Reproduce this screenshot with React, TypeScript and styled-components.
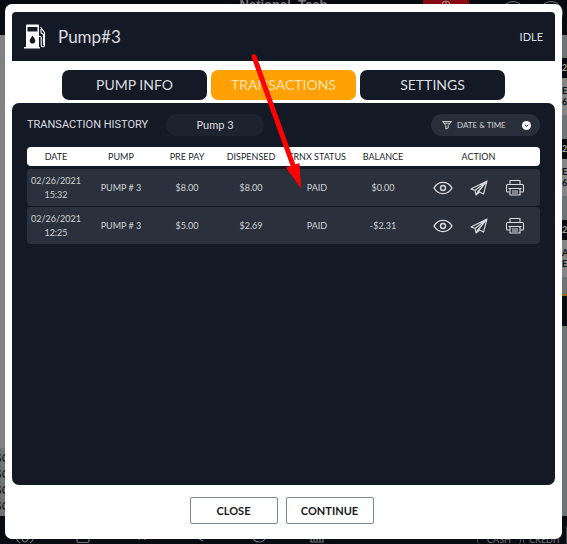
import React from "react";
import styled, { createGlobalStyle } from "styled-components";

const GlobalStyle = createGlobalStyle`
  * { box-sizing: border-box; }
  body { margin: 0; background: #7b807f; font-family: Lato, "Open Sans", sans-serif; }
  button { font-family: inherit; cursor: pointer; }
`;

const navy = "#141a25";

/* ---------- Dimmed register screen behind the dialog ---------- */

const Screen = styled.div`
  position: relative;
  display: flex;
  flex-direction: column;
  height: 100vh;
  overflow: hidden;
`;

const TopBar = styled.div`
  display: grid;
  grid-template-columns: 1fr 46px 98px;
  flex: none;
  height: 35px;
  background: #0a0a13;
  overflow: hidden;
`;

const StoreName = styled.span`
  padding-left: 144px;
  justify-self: center;
  font: 700 13px/10px "Liberation Sans", Arial, sans-serif;
  color: #77777b;
`;

const Alert = styled.div`
  display: flex;
  justify-content: center;
  background: #850b10;
`;

const RoundActions = styled.div`
  display: flex;
  justify-content: flex-end;
  gap: 14px;
  padding-top: 1px;
  padding-right: 4px;
`;

const Round = styled.span`
  width: 24px;
  height: 24px;
  border: 1px solid #77777b;
  border-radius: 50%;
`;

const Backdrop = styled.div`
  display: flex;
  flex: 1;
  justify-content: space-between;
  overflow: hidden;
`;

const Strip = styled.div<{ $end?: boolean }>`
  display: flex;
  flex-direction: column;
  justify-content: ${(p) => (p.$end ? "flex-end" : "flex-start")};
  width: 5px;
  background: ${(p) => (p.$end ? "#828282" : "#6d7473")};
  overflow: hidden;
`;

const Codes = styled.div`
  display: flex;
  flex-direction: column;
  align-items: center;
  padding: 2px 0;
  background: #6d7473;
  font-size: 11px;
  line-height: 16px;
  color: #111;
`;

const OrderCard = styled.div`
  height: 57px;
  margin-bottom: 24px;
  background: #858585;
  font-size: 9px;
  font-weight: 700;
  line-height: 10px;
  color: #111;
  &:first-child { margin-top: 23px; }
  &:nth-last-child(2) { margin-bottom: 17px; }
`;

const OrderTime = styled.div`
  height: 20px;
  margin-bottom: 8px;
  background: #0a0a13;
  color: #a5a5a5;
  line-height: 20px;
`;

const OrderLine = styled.div`
  height: 11px;
`;

const OrderTotal = styled.div`
  height: 32px;
  border-top: 2px solid #a3660c;
  background: #0a0a13;
`;

const BottomBar = styled.div`
  display: flex;
  align-items: flex-end;
  justify-content: space-between;
  flex: none;
  height: 28px;
  padding-left: 16px;
  background: #0a0a13;
  color: #77777b;
`;

const BarIcons = styled.div`
  display: flex;
  justify-content: space-between;
  width: 310px;
  height: 28px;
`;

const Payments = styled.div`
  display: flex;
  gap: 2px;
`;

const Payment = styled.button`
  display: flex;
  align-items: flex-end;
  justify-content: center;
  width: 44px;
  height: 18px;
  padding: 0;
  border: 1px solid #4b4b53;
  border-width: 0 1px;
  border-radius: 3px;
  background: transparent;
  color: #77777b;
  font-size: 9px;
  line-height: 9px;
`;

/* ---------- Dialog ---------- */

const Overlay = styled.div`
  position: absolute;
  inset: 0;
  display: flex;
  padding: 4px 5px 5px;
`;

const Dialog = styled.section`
  display: flex;
  flex: 1;
  flex-direction: column;
  min-width: 0;
  padding: 8px 7px 0;
  border-radius: 7px;
  background: #fff;
`;

const Header = styled.header`
  display: flex;
  align-items: center;
  gap: 12px;
  height: 49px;
  padding: 0 12px;
  border-radius: 4px 4px 0 0;
  background: ${navy};
  color: #dcdde0;
`;

const Title = styled.h1`
  flex: 1;
  margin: 0;
  font-size: 17px;
  font-weight: 400;
  line-height: 24px;
`;

const Status = styled.span`
  font-size: 11px;
  line-height: 16px;
`;

const Tabs = styled.nav`
  display: flex;
  gap: 4px;
  padding: 9px 50px 3px;
`;

const Tab = styled.button<{ $active?: boolean }>`
  flex: 1;
  height: 30px;
  padding: 0;
  border: 0;
  border-radius: 7px;
  background: ${(p) => (p.$active ? "#ffa104" : navy)};
  color: ${(p) => (p.$active ? "#ffe3ad" : "#dcdde0")};
  font-size: 14px;
  line-height: 20px;
`;

const Panel = styled.div`
  flex: 1;
  padding: 11px 15px;
  border-radius: 7px;
  background: ${navy};
`;

const Toolbar = styled.div`
  display: flex;
  align-items: center;
  margin-bottom: 11px;
`;

const Heading = styled.h2`
  width: 139px;
  margin: 0;
  font: 400 11px/16px Roboto, Arial, sans-serif;
  white-space: nowrap;
  color: #dcdde0;
`;

const PumpPill = styled.button`
  width: 98px;
  height: 22px;
  padding: 0;
  border: 0;
  border-radius: 11px;
  background: #1d232e;
  color: #dcdde0;
  font-size: 11px;
  line-height: 16px;
`;

const FilterPill = styled.button`
  display: flex;
  align-items: center;
  gap: 5px;
  width: 109px;
  height: 22px;
  margin-left: auto;
  padding: 0 9px 0 11px;
  border: 0;
  border-radius: 11px;
  background: #292f3a;
  color: #d0d2d5;
  font-size: 8px;
  line-height: 12px;
  white-space: nowrap;
  svg:last-child { margin-left: auto; }
`;

const Table = styled.table`
  display: grid;
  gap: 3px;
  font-size: 9px;
  line-height: 14px;
`;

const Body = styled.tbody`
  display: grid;
  gap: 1px;
`;

const Row = styled.tr<{ $head?: boolean }>`
  display: grid;
  grid-template-columns: 58fr 72fr 60fr 68fr 64fr 68fr 123fr;
  align-items: center;
  height: ${(p) => (p.$head ? "19px" : "37px")};
  border-radius: 4px;
  background: ${(p) => (p.$head ? "#fff" : "#2b313c")};
  color: ${(p) => (p.$head ? "#20242c" : "#d0d2d5")};
`;

const HeadCell = styled.th`
  padding: 0;
  font-weight: 400;
  white-space: nowrap;
  text-align: center;
`;

const Cell = styled.td`
  padding: 0;
  text-align: center;
`;

const Actions = styled.div`
  display: flex;
  justify-content: center;
  gap: 16px;
`;

const IconButton = styled.button`
  display: flex;
  padding: 0;
  border: 0;
  background: transparent;
  color: #d9dadd;
`;

const Footer = styled.footer`
  display: flex;
  justify-content: center;
  gap: 8px;
  height: 54px;
  padding: 12px 4px 15px 0;
`;

const FooterButton = styled.button`
  width: 88px;
  padding: 0;
  border: 1px solid #7d8596;
  border-radius: 2px;
  background: #fff;
  color: #171a20;
  font-size: 11px;
  font-weight: 700;
  line-height: 16px;
`;

/* Pointer drawn on top of the table, aimed at the first status cell. */
const Pointer = styled.svg`
  position: absolute;
  top: 50px;
  left: calc(50% - 39px);
  pointer-events: none;
`;

/* ---------- Icons ---------- */

const PumpIcon = () => (
  <svg width="22" height="26" viewBox="0 0 22 26" fill="none">
    <path d="M2 1.5Q2 .5 3 .5h11q1 0 1 1V23h1v1.5H0V23h2z" fill="#fff" />
    <path d="M3.5 3h10v4.5h-10z" fill={navy} />
    <path d="M8.500 11.500c1.200 2 2.800 3.400 2.800 5.200a2.800 2.800 0 0 1-5.600 0c0-1.800 1.600-3.200 2.800-5.200z" fill={navy} />
    <path d="M15 12.500h1.200q1 0 1 1V21q0 1.800 1.700 1.800T20.500 21V8.500L16.500 3M17 5v3.200q0 1.300 1.300 1.300l1.200 1V21" stroke="#fff" strokeWidth="1.1" />
  </svg>
);

const EyeIcon = () => (
  <svg width="20" height="18" viewBox="0 0 20 18" fill="none" stroke="currentColor" strokeWidth="1.4">
    <path d="M1 9C3.200 5.300 6.300 3.400 10 3.400S16.800 5.300 19 9c-2.200 3.700-5.300 5.600-9 5.600S3.200 12.700 1 9z" />
    <circle cx="10" cy="9" r="2.5" />
  </svg>
);

const SendIcon = () => (
  <svg width="20" height="18" viewBox="0 0 20 18" fill="none" stroke="currentColor" strokeWidth="1.1" strokeLinejoin="round">
    <path d="M18 2 2 10l4 1.500zM18 2 6 11.500l1 4.500zM18 2 9 12.300l5.500 2.700zM7 16l2-3.700 1.300 1z" />
  </svg>
);

const PrinterIcon = () => (
  <svg width="20" height="18" viewBox="0 0 20 18" fill="none" stroke="currentColor" strokeWidth="1.1" strokeLinejoin="round">
    <path d="M5 5.500V1.500h10v4M5 13H2.500Q1.500 13 1.500 12V6.500q0-1 1-1h15q1 0 1 1V12q0 1-1 1H15" />
    <path d="M5 9.500h10v6.500H5zM3.500 9.500h13M7 12h6M7 14h6" />
  </svg>
);

const FunnelIcon = () => (
  <svg width="10" height="10" viewBox="0 0 10 10" fill="none" stroke="currentColor" strokeWidth="1" strokeLinejoin="round">
    <path d="M.5 1.500h9L6.200 5.500v2.500L3.800 9V5.500zM2 3.200h6" />
  </svg>
);

const ChevronDot = () => (
  <svg width="9" height="9" viewBox="0 0 9 9">
    <circle cx="4.5" cy="4.5" r="4.5" fill="#fff" />
    <path d="m2.700 3.800 1.800 1.700 1.800-1.700" fill="none" stroke={navy} strokeWidth="1" />
  </svg>
);

const barIcons = [
  "M3 14a8 8 0 0 0 1 13M15 14a8 8 0 0 1-1 13M9 18a3 4 0 1 0 .1 0",
  "M3 14h12v11q0 1.500-1.500 1.500h-9Q3 26.500 3 25z",
  "M6 12v12M12 12v12",
  "M5 14q0 8 7 11",
  "M9 12a7 7 0 1 0 .1 0",
  "M3 14h12v12H3zM6 20v5M9 20v5M12 20v5",
];

const orders = [
  ["2:", "EF", "6."],
  ["2:", "EF", "6."],
  ["2:", "AI", "E"],
];

const columns = ["DATE", "PUMP", "PRE PAY", "DISPENSED", "TRNX STATUS", "BALANCE", "ACTION"];

const transactions = [
  { date: "02/26/2021", time: "15:32", pump: "PUMP # 3", prepay: "$8.00", dispensed: "$8.00", status: "PAID", balance: "$0.00" },
  { date: "02/26/2021", time: "12:25", pump: "PUMP # 3", prepay: "$5.00", dispensed: "$2.69", status: "PAID", balance: "-$2.31" },
];

export default function App() {
  return (
    <Screen>
      <GlobalStyle />
      <TopBar>
        <StoreName>National&nbsp; Tech</StoreName>
        <Alert>
          <svg width="12" height="12" viewBox="0 0 12 12" fill="none" stroke="#a5a5a5">
            <circle cx="6" cy="5" r="4" />
            <path d="M6 2v5" />
          </svg>
        </Alert>
        <RoundActions>
          <Round />
          <Round />
        </RoundActions>
      </TopBar>
      <Backdrop>
        <Strip $end>
          <Codes>
            {[0, 1, 2, 3].map((i) => (
              <span key={i}>SC</span>
            ))}
          </Codes>
        </Strip>
        <Strip>
          {orders.map(([time, name, amount], i) => (
            <OrderCard key={i}>
              <OrderTime>{time}</OrderTime>
              <OrderLine>{name}</OrderLine>
              <OrderLine>{amount}</OrderLine>
            </OrderCard>
          ))}
          <OrderTotal />
        </Strip>
      </Backdrop>
      <BottomBar>
        <BarIcons>
          {barIcons.map((d) => (
            <svg key={d} width="18" height="28" viewBox="0 0 18 28" fill="none" stroke="currentColor" strokeWidth="1.2">
              <path d={d} />
            </svg>
          ))}
        </BarIcons>
        <Payments>
          <Payment>CASH</Payment>
          <Payment>CREDIT</Payment>
        </Payments>
      </BottomBar>

      <Overlay>
        <Dialog role="dialog" aria-labelledby="pump-title">
          <Header>
            <PumpIcon />
            <Title id="pump-title">Pump#3</Title>
            <Status>IDLE</Status>
          </Header>
          <Tabs>
            <Tab>PUMP INFO</Tab>
            <Tab $active>TRANSACTIONS</Tab>
            <Tab>SETTINGS</Tab>
          </Tabs>
          <Panel>
            <Toolbar>
              <Heading>TRANSACTION HISTORY</Heading>
              <PumpPill>Pump 3</PumpPill>
              <FilterPill>
                <FunnelIcon />
                DATE &amp; TIME
                <ChevronDot />
              </FilterPill>
            </Toolbar>
            <Table>
              <thead>
                <Row $head>
                  {columns.map((c) => (
                    <HeadCell key={c} scope="col">{c}</HeadCell>
                  ))}
                </Row>
              </thead>
              <Body>
                {transactions.map((t) => (
                  <Row key={t.time}>
                    <Cell>
                      {t.date}
                      <br />
                      {t.time}
                    </Cell>
                    <Cell>{t.pump}</Cell>
                    <Cell>{t.prepay}</Cell>
                    <Cell>{t.dispensed}</Cell>
                    <Cell>{t.status}</Cell>
                    <Cell>{t.balance}</Cell>
                    <Cell>
                      <Actions>
                        <IconButton aria-label="View"><EyeIcon /></IconButton>
                        <IconButton aria-label="Send"><SendIcon /></IconButton>
                        <IconButton aria-label="Print"><PrinterIcon /></IconButton>
                      </Actions>
                    </Cell>
                  </Row>
                ))}
              </Body>
            </Table>
          </Panel>
          <Footer>
            <FooterButton>CLOSE</FooterButton>
            <FooterButton>CONTINUE</FooterButton>
          </Footer>
        </Dialog>
      </Overlay>
      <Pointer width="60" height="142" viewBox="0 0 60 142">
        <path d="M9 6.500 49 118" stroke="#f00" strokeWidth="5" strokeLinecap="round" />
        <path d="M41 117.500 54.500 113 56 138.500z" fill="#f00" />
      </Pointer>
    </Screen>
  );
}
